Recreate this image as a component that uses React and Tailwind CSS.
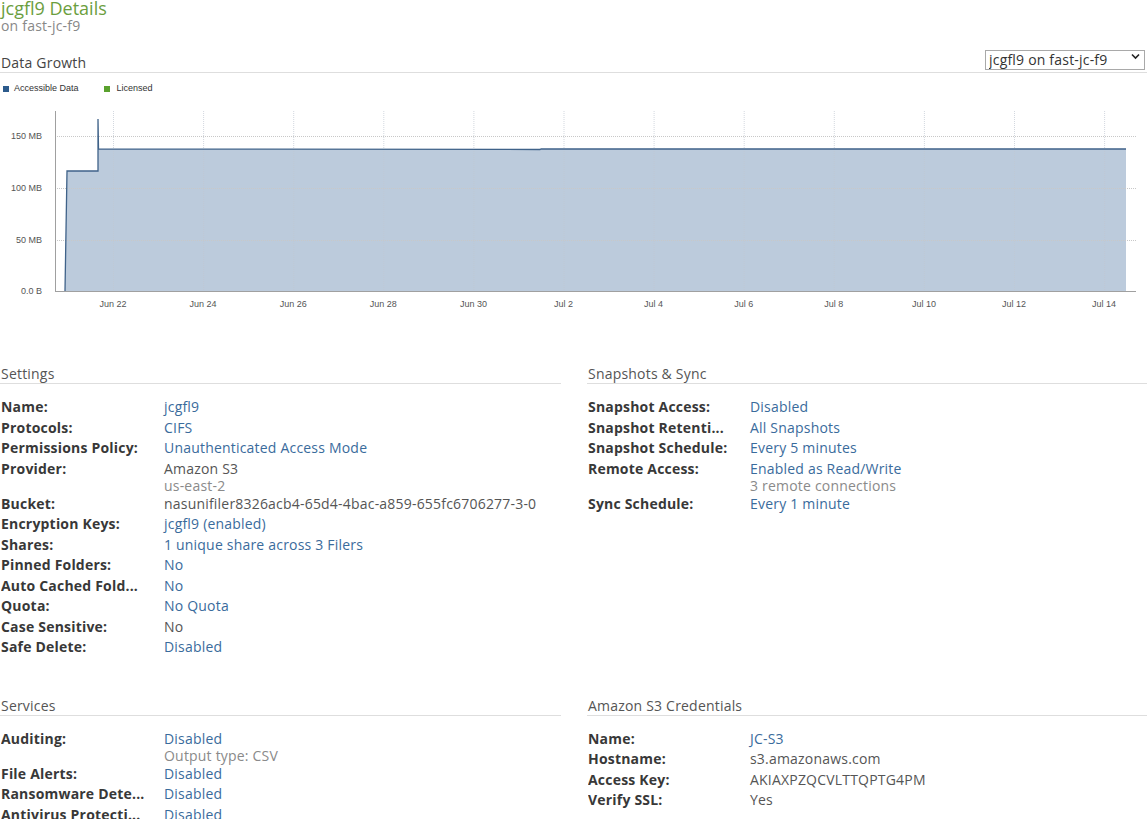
import React from 'react';

const BLUE = 'text-[#3a6b9c]';

// x positions of the date gridlines
const xTicks = ['Jun 22', 'Jun 24', 'Jun 26', 'Jun 28', 'Jun 30', 'Jul 2', 'Jul 4', 'Jul 6', 'Jul 8', 'Jul 10', 'Jul 12', 'Jul 14'];
const yTicks = [
  { label: '150 MB', y: 36 },
  { label: '100 MB', y: 88 },
  { label: '50 MB', y: 140 },
  { label: '0.0 B', y: 191 },
];

const settings = [
  { label: 'Name:', value: 'jcgfl9', link: true },
  { label: 'Protocols:', value: 'CIFS', link: true },
  { label: 'Permissions Policy:', value: 'Unauthenticated Access Mode', link: true },
  { label: 'Provider:', value: 'Amazon S3', sub: 'us-east-2' },
  { label: 'Bucket:', value: 'nasunifiler8326acb4-65d4-4bac-a859-655fc6706277-3-0' },
  { label: 'Encryption Keys:', value: 'jcgfl9 (enabled)', link: true },
  { label: 'Shares:', value: '1 unique share across 3 Filers', link: true },
  { label: 'Pinned Folders:', value: 'No', link: true },
  { label: 'Auto Cached Fold...', value: 'No', link: true },
  { label: 'Quota:', value: 'No Quota', link: true },
  { label: 'Case Sensitive:', value: 'No' },
  { label: 'Safe Delete:', value: 'Disabled', link: true },
];

const snapshots = [
  { label: 'Snapshot Access:', value: 'Disabled', link: true },
  { label: 'Snapshot Retenti...', value: 'All Snapshots', link: true },
  { label: 'Snapshot Schedule:', value: 'Every 5 minutes', link: true },
  { label: 'Remote Access:', value: 'Enabled as Read/Write', link: true, sub: '3 remote connections' },
  { label: 'Sync Schedule:', value: 'Every 1 minute', link: true },
];

const services = [
  { label: 'Auditing:', value: 'Disabled', link: true, sub: 'Output type: CSV' },
  { label: 'File Alerts:', value: 'Disabled', link: true },
  { label: 'Ransomware Dete...', value: 'Disabled', link: true },
  { label: 'Antivirus Protecti...', value: 'Disabled', link: true },
];

const credentials = [
  { label: 'Name:', value: 'JC-S3', link: true },
  { label: 'Hostname:', value: 's3.amazonaws.com' },
  { label: 'Access Key:', value: 'AKIAXPZQCVLTTQPTG4PM' },
  { label: 'Verify SSL:', value: 'Yes' },
];

const Section = ({ title, rows, right }) => (
  <div>
    <div className="border-b border-[#dedede] pl-[1px] text-[14px] leading-[19px] tracking-[0.2px] text-[#555]">{title}</div>
    <div className="mt-[13px] pl-[1px]">
      {rows.map((r, i) => (
        <div key={i} className={`grid text-[14px] tracking-[0.2px] ${right ? 'grid-cols-[162px_1fr]' : 'grid-cols-[163px_1fr]'}`}>
          <div className="truncate pr-[10px] font-bold leading-[20.5px] text-[#383838]">{r.label}</div>
          <div>
            <div className={`leading-[20.5px] ${r.link ? BLUE : 'text-[#555]'}`}>{r.value}</div>
            {r.sub && <div className="leading-[14.5px] text-[#8a8a8a]">{r.sub}</div>}
          </div>
        </div>
      ))}
    </div>
  </div>
);

const Chart = () => {
  const fillPath = 'M65,191 L67,71 L98,71 L98,49 L540,49.5 L541,49 L1126,49 L1126,191 Z';
  const linePath = 'M65,191 L67,71 L98,71 L98,19 L98.5,49 L540,49.5 L541,49 L1126,49';
  return (
    <svg width="1147" height="220" viewBox="0 0 1147 220" className="block" style={{ fontFamily: '"Liberation Sans", Arial, sans-serif' }}>
      <path d={fillPath} fill="#bccbdc" />
      {yTicks.slice(0, 3).map((t) => (
        <line key={t.label} x1="55" x2="1136" y1={t.y + 0.5} y2={t.y + 0.5} stroke="#c8c8c8" strokeDasharray="1 1" />
      ))}
      {xTicks.map((t, i) => {
        const x = 113 + i * 90.1;
        return <line key={t} x1={x + 0.5} x2={x + 0.5} y1="11" y2="191" stroke="#c0c8d2" strokeOpacity="0.7" strokeDasharray="1 1" />;
      })}
      <path d={linePath} fill="none" stroke="#3f6289" strokeWidth="1.3" />
      <line x1="55.5" x2="55.5" y1="11" y2="192" stroke="#a0a0a0" />
      <line x1="55" x2="1136" y1="191.5" y2="191.5" stroke="#a0a0a0" />
      {yTicks.map((t) => (
        <text key={t.label} x="42" y={t.y + 3} textAnchor="end" fontSize="9" fill="#555">{t.label}</text>
      ))}
      {xTicks.map((t, i) => (
        <text key={t} x={113 + i * 90.1} y="207" textAnchor="middle" fontSize="9" fill="#555">{t}</text>
      ))}
    </svg>
  );
};

const App = () => {
  return (
    <div className="w-[1147px] overflow-hidden bg-white" style={{ fontFamily: '"Open Sans", "Noto Sans", sans-serif' }}>
      {/* Title */}
      <div className="pl-[1px] text-[18px] leading-[16px] text-[#6b9e3e]">jcgfl9 Details</div>
      <div className="mt-[3px] pl-[1px] text-[14px] leading-[14px] tracking-[0.2px] text-[#888]">on fast-jc-f9</div>

      {/* Data growth header */}
      <div className="mt-[19px] flex h-[21px] items-end justify-between border-b border-[#dedede]">
        <div className="pl-[1px] text-[14px] leading-[18px] tracking-[0.2px] text-[#444]">Data Growth</div>
        <div className="relative mr-[2px] mb-[1px]">
          <select className="h-[20px] w-[160px] appearance-none border border-[#a9a9a9] bg-white pl-[3px] text-[14px] leading-[18px] tracking-[0.2px] text-[#333] outline-none">
            <option>jcgfl9 on fast-jc-f9</option>
          </select>
          <svg className="pointer-events-none absolute right-[5px] top-[6px]" width="9" height="7" viewBox="0 0 9 7">
            <path d="M1 1.5 L4.5 5 L8 1.5" fill="none" stroke="#222" strokeWidth="1.6" />
          </svg>
        </div>
      </div>

      {/* Legend */}
      <div className="mt-[11px] flex h-[10px] items-center text-[9px] text-[#333]" style={{ fontFamily: '"Liberation Sans", Arial, sans-serif' }}>
        <span className="ml-[3px] h-[6px] w-[6px] bg-[#2d5b8c]" />
        <span className="ml-[5px]">Accessible Data</span>
        <span className="ml-[25px] h-[6px] w-[6px] bg-[#5aa12e]" />
        <span className="ml-[7px]">Licensed</span>
      </div>

      <div className="mt-[6px]">
        <Chart />
      </div>

      {/* Details */}
      <div className="mt-[44px] grid grid-cols-[561px_1fr] gap-x-[26px] gap-y-[38px]">
        <Section title="Settings" rows={settings} />
        <Section title="Snapshots & Sync" rows={snapshots} right />
        <Section title="Services" rows={services} />
        <Section title="Amazon S3 Credentials" rows={credentials} right />
      </div>
    </div>
  );
};

export default App;
